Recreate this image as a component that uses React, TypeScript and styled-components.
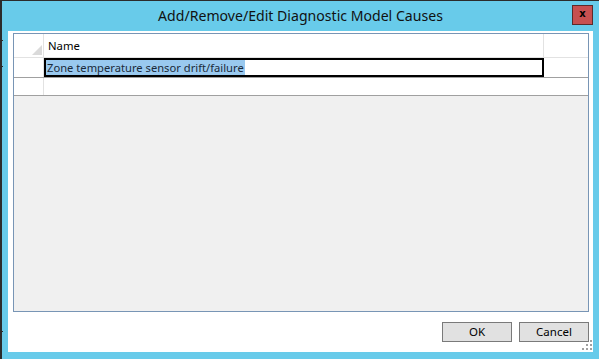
import React from 'react';
import styled, { createGlobalStyle } from 'styled-components';

const GlobalStyle = createGlobalStyle`
  html, body {
    margin: 0;
    padding: 0;
    background: #68cbea;
  }
  body {
    font-family: "Noto Sans", "Open Sans", sans-serif;
    color: #000;
  }
`;

const Window = styled.div`
  position: relative;
  width: 599px;
  height: 359px;
  box-sizing: border-box;
  background: #68cbea;
  border-top: 1px solid #2b2b2b;
  border-left: 2px solid #2b2b2b;
  padding: 0 6px 7px 6px;
  display: flex;
  flex-direction: column;
`;

const Tick = styled.span<{ $top: number }>`
  position: absolute;
  left: -2px;
  top: ${p => p.$top}px;
  width: 3px;
  height: 1px;
  background: #2b2b2b;
`;

const TitleBar = styled.div`
  height: 30px;
  display: grid;
  grid-template-columns: 1fr auto 1fr;
  align-items: center;
`;

const Title = styled.div`
  grid-column: 2;
  font-size: 14.1px;
  line-height: 30px;
  color: #111;
  white-space: nowrap;
`;

const CloseButton = styled.div`
  grid-column: 3;
  justify-self: end;
  align-self: start;
  margin-top: 4px;
  width: 21px;
  height: 20px;
  box-sizing: border-box;
  background: #c75050;
  border: 1px solid #5c2a2a;
  display: flex;
  align-items: center;
  justify-content: center;
  font-family: "DejaVu Sans", sans-serif;
  font-weight: bold;
  font-size: 10px;
  line-height: 1;
  padding-bottom: 2px;
`;

const Client = styled.div`
  position: relative;
  flex: 1;
  background: #fff;
  padding: 2px 4px 10px 5px;
  display: flex;
  flex-direction: column;
`;

const Panel = styled.div`
  flex: 1;
  border: 1px solid #7895b5;
  background: #f0f0f0;
  display: flex;
  flex-direction: column;
`;

const Row = styled.div<{ $h: number; $line: string }>`
  display: flex;
  height: ${p => p.$h}px;
  border-bottom: 1px solid ${p => p.$line};
  background: #fff;
`;

const RowHeader = styled.div`
  position: relative;
  width: 30px;
  box-sizing: border-box;
  border-right: 1px solid #e2e2e2;
  flex-shrink: 0;
`;

const Corner = styled.svg`
  position: absolute;
  right: 1px;
  bottom: 2px;
`;

const HeaderCell = styled.div`
  width: 500px;
  box-sizing: border-box;
  border-right: 1px solid #e2e2e2;
  font-size: 11.3px;
  padding-left: 4px;
  display: flex;
  align-items: center;
  padding-bottom: 1px;
`;

const Filler = styled.div`
  flex: 1;
`;

const EditCell = styled.div`
  width: 500px;
  box-sizing: border-box;
  border: 2px solid #000;
  font-size: 11.2px;
  line-height: 15px;
  display: flex;
`;

const Selected = styled.span`
  background: #99c9ef;
  color: #1a2a3a;
  padding: 0 1px;
  white-space: nowrap;
`;

const Footer = styled.div`
  display: flex;
  justify-content: flex-end;
  gap: 7px;
  margin-top: 10px;
`;

const Button = styled.div`
  width: 70px;
  height: 20px;
  box-sizing: border-box;
  background: #e1e1e1;
  border: 1px solid #7a7a7a;
  font-size: 11.5px;
  display: flex;
  align-items: center;
  justify-content: center;
  padding-bottom: 1px;
`;

const Grip = styled.svg`
  position: absolute;
  right: 1px;
  bottom: 2px;
`;

const gripDots = [
  [8, 0],
  [4, 4], [8, 4],
  [0, 8], [4, 8], [8, 8],
];

export default function App() {
  return (
    <>
      <GlobalStyle />
      <Window>
        <Tick $top={39} />
        <Tick $top={65} />
        <Tick $top={330} />
        <TitleBar>
          <Title>Add/Remove/Edit Diagnostic Model Causes</Title>
          <CloseButton>x</CloseButton>
        </TitleBar>
        <Client>
          <Panel>
            <Row $h={23} $line="#e2e2e2">
              <RowHeader>
                <Corner width="10" height="10" viewBox="0 0 10 10">
                  <polygon points="10,0 10,10 0,10" fill="#dadada" />
                </Corner>
              </RowHeader>
              <HeaderCell>Name</HeaderCell>
              <Filler />
            </Row>
            <Row $h={19} $line="#a0a0a0">
              <RowHeader />
              <EditCell>
                <Selected>Zone temperature sensor drift/failure</Selected>
              </EditCell>
              <Filler />
            </Row>
            <Row $h={17} $line="#a0a0a0">
              <RowHeader />
              <Filler />
            </Row>
          </Panel>
          <Footer>
            <Button>OK</Button>
            <Button>Cancel</Button>
          </Footer>
          <Grip width="10" height="10" viewBox="0 0 10 10">
            {gripDots.map(([x, y]) => (
              <rect key={`${x}-${y}`} x={x} y={y} width="2" height="2" fill="#a0a0a0" />
            ))}
          </Grip>
        </Client>
      </Window>
    </>
  );
}
